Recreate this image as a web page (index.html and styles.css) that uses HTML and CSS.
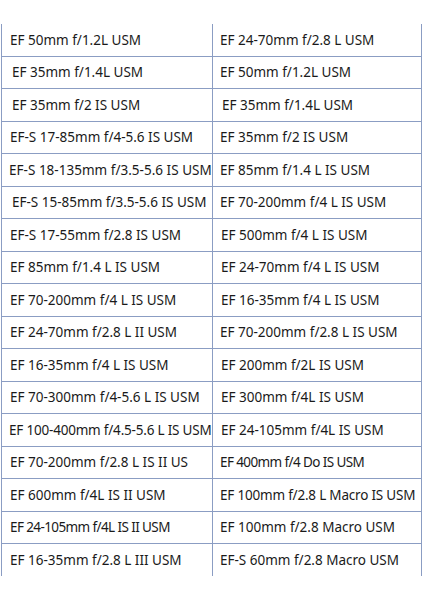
FILE: index.html
```html
<!DOCTYPE html>
<html>
<head>
<meta charset="utf-8">
<link rel="stylesheet" href="styles.css">
</head>
<body>
<table class="lens">
<tr><td>EF 50mm f/1.2L USM</td><td>EF 24-70mm f/2.8 L USM</td></tr>
<tr><td class="in2">EF 35mm f/1.4L USM</td><td>EF 50mm f/1.2L USM</td></tr>
<tr><td class="in2">EF 35mm f/2 IS USM</td><td class="in2">EF 35mm f/1.4L USM</td></tr>
<tr><td>EF-S 17-85mm f/4-5.6 IS USM</td><td>EF 35mm f/2 IS USM</td></tr>
<tr><td class="wide">EF-S 18-135mm f/3.5-5.6 IS USM</td><td>EF 85mm f/1.4 L IS USM</td></tr>
<tr><td class="in2">EF-S 15-85mm f/3.5-5.6 IS USM</td><td>EF 70-200mm f/4 L IS USM</td></tr>
<tr><td>EF-S 17-55mm f/2.8 IS USM</td><td class="in1">EF 500mm f/4 L IS USM</td></tr>
<tr><td>EF 85mm f/1.4 L IS USM</td><td class="in1">EF 24-70mm f/4 L IS USM</td></tr>
<tr><td>EF 70-200mm f/4 L IS USM</td><td class="in1">EF 16-35mm f/4 L IS USM</td></tr>
<tr><td>EF 24-70mm f/2.8 L II USM</td><td>EF 70-200mm f/2.8 L IS USM</td></tr>
<tr><td>EF 16-35mm f/4 L IS USM</td><td class="in1">EF 200mm f/2L IS USM</td></tr>
<tr><td>EF 70-300mm f/4-5.6 L IS USM</td><td class="in1">EF 300mm f/4L IS USM</td></tr>
<tr><td class="tight">EF 100-400mm f/4.5-5.6 L IS USM</td><td class="in1">EF 24-105mm f/4L IS USM</td></tr>
<tr><td>EF 70-200mm f/2.8 L IS II US</td><td class="cond">EF 400mm f/4 Do IS USM</td></tr>
<tr><td>EF 600mm f/4L IS II USM</td><td class="tight">EF 100mm f/2.8 L Macro IS USM</td></tr>
<tr><td class="cond">EF 24-105mm f/4L IS II USM</td><td>EF 100mm f/2.8 Macro USM</td></tr>
<tr><td>EF 16-35mm f/2.8 L III USM</td><td>EF-S 60mm f/2.8 Macro USM</td></tr>
</table>
</body>
</html>
```

FILE: styles.css
```css
html, body {
  margin: 0;
  padding: 0;
  background: #ffffff;
}
body {
  padding-top: 24px;
  padding-left: 1px;
}
.lens {
  border-collapse: collapse;
  width: 421px;
  table-layout: fixed;
  font-family: "Noto Sans", "Open Sans", sans-serif;
  font-size: 13.5px;
  color: #1a1a1a;
}
.lens td {
  height: 31.5px;
  padding: 0 0 0 7px;
  border: 1.5px solid #8b9dc3;
  white-space: nowrap;
  overflow: hidden;
  vertical-align: middle;
  line-height: 16px;
}
.lens td:first-child {
  width: 202px;
  padding-left: 8px;
}
.lens tr:first-child td {
  border-top: none;
}
.lens tr:last-child td {
  border-bottom: none;
}
.lens td.in1 {
  padding-left: 8px;
}
.lens td.in2 {
  padding-left: 9px;
}
.lens td:first-child.in2 {
  padding-left: 10px;
}
.lens td.tight {
  padding-left: 7px;
  letter-spacing: -0.2px;
}
.lens td.wide {
  padding-left: 7px;
  padding-right: 0;
  letter-spacing: 0.02px;
}
.lens td.cond {
  letter-spacing: -0.6px;
}
```
